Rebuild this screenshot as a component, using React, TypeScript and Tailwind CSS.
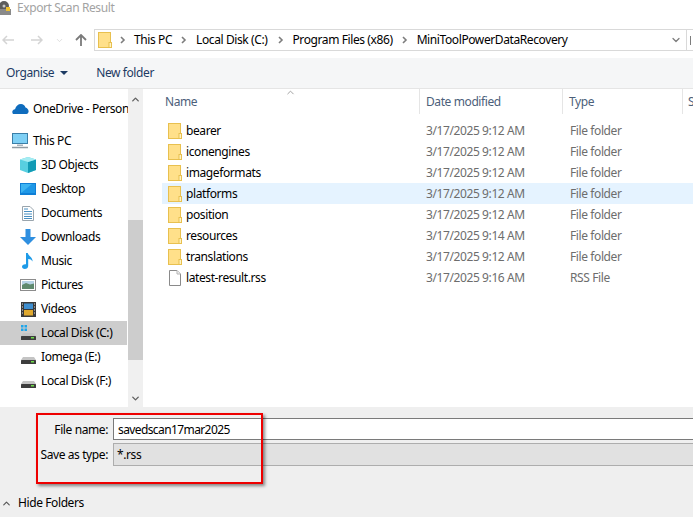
import { ChevronDown, ChevronUp } from 'lucide-react';

const files = [
  { name: 'bearer', date: '3/17/2025 9:12 AM', type: 'File folder' },
  { name: 'iconengines', date: '3/17/2025 9:12 AM', type: 'File folder' },
  { name: 'imageformats', date: '3/17/2025 9:12 AM', type: 'File folder' },
  { name: 'platforms', date: '3/17/2025 9:12 AM', type: 'File folder', hover: true },
  { name: 'position', date: '3/17/2025 9:12 AM', type: 'File folder' },
  { name: 'resources', date: '3/17/2025 9:14 AM', type: 'File folder' },
  { name: 'translations', date: '3/17/2025 9:12 AM', type: 'File folder' },
  { name: 'latest-result.rss', date: '3/17/2025 9:16 AM', type: 'RSS File', file: true },
];

const FolderIcon = () => (
  <svg width="14" height="16" viewBox="0 0 14 16" className="shrink-0">
    <rect x="0.5" y="0.5" width="12" height="15" fill="#ffe08a" stroke="#e8c04f" />
    <rect x="11" y="10.5" width="2.5" height="5" fill="#fff3c4" stroke="#e8c04f" />
  </svg>
);

const PageIcon = () => (
  <svg width="14" height="16" viewBox="0 0 14 16" className="shrink-0">
    <path d="M1.5 .5H9L12.5 4V15.5H1.5Z" fill="#fff" stroke="#8a8a8a" />
    <path d="M9 .5V4H12.5" fill="#f0f0f0" stroke="#b5b5b5" />
  </svg>
);

const Breadcrumb = () => (
  <svg width="6" height="8" viewBox="0 0 6 8" className="shrink-0">
    <path d="M1 1l3 3-3 3" fill="none" stroke="#7d7d7d" strokeWidth="1.6" />
  </svg>
);

const OneDriveIcon = () => (
  <svg width="17" height="12" viewBox="0 0 17 12" className="shrink-0">
    <path d="M1 11C-.5 9 .5 6.500 3 6.200 4 3 6 1 9 1c2.300 0 3.800 1.300 4.500 3.500C15.500 5 17 7 16.500 9c-.3 1.300-1 2-2 2Z" fill="#0f6cbd" />
  </svg>
);

const PcIcon = () => (
  <svg width="16" height="16" viewBox="0 0 16 16">
    <rect x="0.5" y="0.5" width="15" height="10" fill="#7fd0f5" stroke="#3b7fa8" />
    <path d="M5 11.500h6V13H5Z" fill="#a8b4bd" />
    <path d="M0 14.500h16" stroke="#8f9ba3" strokeWidth="1.500" />
  </svg>
);

const CubeIcon = () => (
  <svg width="16" height="16" viewBox="0 0 16 16">
    <path d="M8 0l8 2.500V13l-8 3-8-3V2.500Z" fill="#58cfe0" />
    <path d="M8 5l8-2.500V13l-8 3Z" fill="#129bb5" />
    <path d="M8 0l8 2.500L8 5 0 2.500Z" fill="#a5ecf2" />
  </svg>
);

const DesktopIcon = () => (
  <svg width="16" height="12" viewBox="0 0 16 12">
    <rect x="0" y="0" width="16" height="12" fill="#0f7fd6" />
    <rect x="1" y="1" width="14" height="9" fill="#3db4f2" />
    <path d="M1 10L12 1h3v9Z" fill="#1e97e6" />
  </svg>
);

const DocIcon = () => (
  <svg width="12" height="15" viewBox="0 0 12 15">
    <path d="M.5.5H8L11.500 4V14.500H.5Z" fill="#fff" stroke="#9aa5ad" />
    <path d="M2 3h4M2 5.500h8M2 8h8M2 10.500h8M2 12.500h8" stroke="#4a90c2" />
  </svg>
);

const DownloadIcon = () => (
  <svg width="16" height="16" viewBox="0 0 16 16">
    <path d="M5.500 0h5v8H16l-8 8-8-8h5.500Z" fill="#2f8fe0" />
  </svg>
);

const MusicIcon = () => (
  <svg width="12" height="16" viewBox="0 0 12 16">
    <path d="M4 0h1.800c.3 3 5.200 4 4.700 8.500C9.800 6.800 8 6 6.200 6v7c0 1.800-1.600 3-3.400 3C1 16 0 15 0 13.800 0 12.200 1.700 11 4 11.300Z" fill="#1e9be8" />
  </svg>
);

const PictureIcon = () => (
  <svg width="16" height="12" viewBox="0 0 16 12">
    <rect x="0.5" y="0.500" width="15" height="11" fill="#fff" stroke="#8c8c8c" />
    <rect x="2" y="2" width="12" height="4" fill="#b7d3e6" />
    <path d="M2 6l4-2 4 1.500L14 4.500V10H2Z" fill="#5f8a6e" />
  </svg>
);

const VideoIcon = () => (
  <svg width="15" height="15" viewBox="0 0 15 15">
    <rect width="15" height="15" fill="#3a3a3a" />
    <rect x="3" y="1.500" width="9" height="5.500" fill="#3f8fd0" />
    <rect x="3" y="8" width="9" height="5.500" fill="#e0a92e" />
    <path d="M1 2h1M1 5h1M1 8h1M1 11h1M13 2h1M13 5h1M13 8h1M13 11h1" stroke="#ddd" />
  </svg>
);

const DiskIcon = ({ win }: { win?: boolean }) => (
  <svg width="15" height="16" viewBox="0 0 15 16">
    {win && <path d="M0 0h2.500v2.500H0ZM3.500 0H6v2.500H3.500ZM0 3.500h2.500V6H0ZM3.500 3.500H6V6H3.500Z" fill="#1ea5ea" />}
    <path d="M2 8h11l2 3H0Z" fill="#c4c4c4" />
    <rect x="0" y="11" width="15" height="4" rx="0.500" fill="#3d3d3d" />
    <rect x="10" y="12" width="3" height="1.500" fill="#6fdc4a" />
  </svg>
);

const AppIcon = () => (
  <svg width="11" height="14" viewBox="0 0 11 14" className="shrink-0">
    <circle cx="4" cy="5" r="5" fill="#5d5d5d" />
    <circle cx="4" cy="5" r="1.500" fill="#c8c8c8" />
    <rect x="0" y="8" width="11" height="6" fill="#8a8a8a" />
    <rect x="6" y="6" width="4" height="4" fill="#f2c230" />
  </svg>
);

const navItems = [
  { label: 'This PC', icon: <PcIcon />, top: true },
  { label: '3D Objects', icon: <CubeIcon /> },
  { label: 'Desktop', icon: <DesktopIcon /> },
  { label: 'Documents', icon: <DocIcon /> },
  { label: 'Downloads', icon: <DownloadIcon /> },
  { label: 'Music', icon: <MusicIcon /> },
  { label: 'Pictures', icon: <PictureIcon /> },
  { label: 'Videos', icon: <VideoIcon /> },
  { label: 'Local Disk (C:)', icon: <DiskIcon win />, selected: true },
  { label: 'Iomega (E:)', icon: <DiskIcon /> },
  { label: 'Local Disk (F:)', icon: <DiskIcon /> },
];

export default function App() {
  return (
    <div className="relative w-[693px] h-[517px] overflow-hidden bg-white flex flex-col text-[12px] tracking-[-0.4px] text-black font-['Noto_Sans',sans-serif]">
      {/* title bar */}
      <div className="h-[29px] shrink-0 pb-[13px] flex items-center gap-[6px] text-[#a3a3a3]">
        <AppIcon />
        <span>Export Scan Result</span>
      </div>

      {/* nav + address */}
      <div className="h-[22px] shrink-0 flex items-center">
        <div className="w-[94px] shrink-0 flex items-center">
          <svg width="12" height="10" viewBox="0 0 12 10" className="ml-[2px]"><path d="M5 1L1 5l4 4M1 5h11" fill="none" stroke="#d4d4d4" strokeWidth="1.500" /></svg>
          <svg width="12" height="10" viewBox="0 0 12 10" className="ml-[17px]"><path d="M7 1l4 4-4 4M11 5H0" fill="none" stroke="#d4d4d4" strokeWidth="1.500" /></svg>
          <ChevronDown size={9} className="ml-[12px]" strokeWidth={2} color="#d4d4d4" />
          <svg width="12" height="12" viewBox="0 0 12 12" className="ml-[11px]"><path d="M1 6l5-5 5 5M6 1v11" fill="none" stroke="#7a7a7a" strokeWidth="1.800" /></svg>
        </div>
        <div className="flex-1 min-w-0 h-[22px] border border-[#d9d9d9] border-r-0 flex items-center pl-[3px]">
          <FolderIcon />
          <div className="ml-[8px]"><Breadcrumb /></div>
          <span className="ml-[8px]">This PC</span>
          <div className="ml-[9px]"><Breadcrumb /></div>
          <span className="ml-[9px]">Local Disk (C:)</span>
          <div className="ml-[10px]"><Breadcrumb /></div>
          <span className="ml-[9px]">Program Files (x86)</span>
          <div className="ml-[9px]"><Breadcrumb /></div>
          <span className="ml-[9px]">MiniToolPowerDataRecovery</span>
          <ChevronDown size={12} strokeWidth={2.5} className="ml-auto" color="#7d7d7d" />
          <div className="ml-[4px] w-[7px] h-full border-l border-[#d9d9d9] flex items-center pl-[3px]">
            <div className="w-[3px] h-[9px] border-l border-[#7d7d7d]" />
          </div>
        </div>
      </div>

      {/* toolbar */}
      <div className="mt-[7px] h-[30px] shrink-0 bg-[#f5f6f7] flex items-center pl-[6px] text-[#1c3a63]">
        <span>Organise</span>
        <svg width="8" height="4" viewBox="0 0 8 4" className="ml-[6px]"><path d="M0 0h8L4 4Z" fill="#1c3a63" /></svg>
        <span className="ml-[28px]">New folder</span>
      </div>

      {/* body */}
      <div className="flex-1 flex min-h-0 border-t border-[#e5e5e5]">
        <div className="w-[128px] shrink-0 overflow-hidden pt-[8px]">
          <div className="h-[24px] flex items-center pl-[12px] whitespace-nowrap">
            <OneDriveIcon />
            <span className="ml-[4px]">OneDrive - Personal</span>
          </div>
          <div className="mt-[8px]">
            {navItems.map((item) => (
              <div
                key={item.label}
                className={`h-[24px] flex items-center whitespace-nowrap ${item.top ? 'pl-[12px]' : 'pl-[20px]'} ${item.selected ? 'bg-[#cdcdcd] mr-[1px]' : ''}`}
              >
                <span className="w-[16px] flex justify-center">{item.icon}</span>
                <span className="ml-[5px]">{item.label}</span>
              </div>
            ))}
          </div>
        </div>

        {/* sidebar scrollbar */}
        <div className="w-[15px] shrink-0 bg-[#f0f0f0] flex flex-col items-center">
          <div className="h-[20px] flex items-center"><ChevronUp size={11} strokeWidth={3} color="#606060" /></div>
          <div className="h-[111px]" />
          <div className="h-[140px] w-full bg-[#cdcdcd]" />
          <div className="flex-1 flex items-end pb-[3px]"><ChevronDown size={11} strokeWidth={3} color="#606060" /></div>
        </div>

        {/* file list */}
        <div className="flex-1 min-w-0 pl-[4px]">
          <div className="h-[25px] flex text-[#4c607a]">
            <div className="w-[273px] shrink-0 border-r border-[#e5e5e5] pl-[18px] flex items-center relative">
              Name
              <ChevronUp size={11} color="#9a9a9a" className="absolute left-[138px] top-[-2px]" />
            </div>
            <div className="w-[143px] shrink-0 border-r border-[#e5e5e5] pl-[6px] flex items-center">Date modified</div>
            <div className="w-[120px] shrink-0 border-r border-[#e5e5e5] pl-[6px] flex items-center">Type</div>
            <div className="pl-[5px] flex items-center">Size</div>
          </div>
          <div className="pt-[6px] pl-[15px]">
            {files.map((f) => (
              <div key={f.name} className={`h-[21px] flex items-center whitespace-nowrap ${f.hover ? 'bg-[#e5f3ff]' : ''}`}>
                <div className="w-[264px] shrink-0 flex items-center pl-[6px]">
                  {f.file ? <PageIcon /> : <FolderIcon />}
                  <span className="ml-[4px]">{f.name}</span>
                </div>
                <div className="w-[144px] shrink-0 text-[#6d6d6d]">{f.date}</div>
                <div className="text-[#6d6d6d]">{f.type}</div>
              </div>
            ))}
          </div>
        </div>
      </div>

      {/* footer */}
      <div className="h-[110px] shrink-0 bg-[#efefef] pt-[11px]">
        <div className="flex h-[22px] items-center">
          <label className="w-[108px] text-right shrink-0 pt-[2px]">File name:</label>
          <input
            readOnly
            value="savedscan17mar2025"
            className="ml-[5px] flex-1 min-w-0 h-[22px] bg-white border border-[#7a7a7a] border-r-0 px-[4px] tracking-[-0.6px] outline-none"
          />
        </div>
        <div className="flex h-[23px] items-center mt-[3px]">
          <label className="w-[108px] text-right shrink-0">Save as type:</label>
          <div className="ml-[5px] flex-1 h-[23px] bg-[#e1e1e1] border border-[#adadad] border-r-0 pl-[3px] flex items-center">*.rss</div>
        </div>
        <div className="mt-[28px] flex items-center pl-[1px]">
          <ChevronUp size={11} strokeWidth={2.500} color="#555" />
          <span className="ml-[6px]">Hide Folders</span>
        </div>
      </div>

      {/* red annotation box */}
      <div className="absolute left-[36px] top-[413px] w-[227px] h-[71px] border-2 border-[#ee0000] shadow-[2px_2px_3px_rgba(0,0,0,0.45)]" />
    </div>
  );
}
